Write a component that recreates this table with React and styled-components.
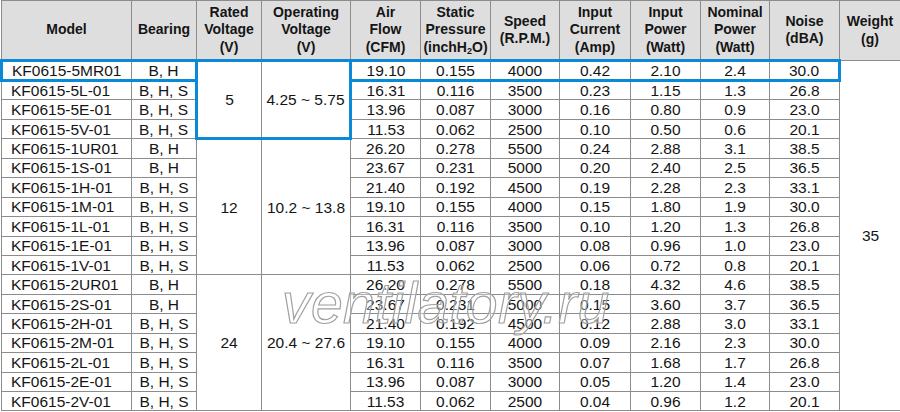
import styled, { createGlobalStyle } from "styled-components";

const GlobalStyle = createGlobalStyle`
  html, body {
    margin: 0;
    padding: 0;
    background: #fff;
  }
  body {
    font-family: "Liberation Sans", Arial, Helvetica, sans-serif;
  }
`;

const BLUE = "#0a8ad6";
const LINE = "#8c8c8c";

const Page = styled.div`
  position: relative;
  width: 900px;
  height: 412px;
  overflow: hidden;
`;

const SpecTable = styled.table`
  border-collapse: collapse;
  table-layout: fixed;
  width: 899px;
  color: #151515;
`;

const Col = styled.col`
  width: ${({ $w }) => $w}px;
`;

const HeadRow = styled.tr`
  height: 60px;
`;

const HeadCell = styled.th`
  padding: 0;
  background: #dedede;
  border: 1px solid ${LINE};
  font-size: 14px;
  line-height: 17.5px;
  font-weight: 700;
  text-align: center;
  vertical-align: middle;
  white-space: nowrap;

  sub {
    font-size: 9px;
    line-height: 0;
    vertical-align: -2px;
  }
`;

const Row = styled.tr`
  height: 19.44px;
`;

const edge = (on) => (on ? `3px solid ${BLUE}` : `1px solid ${LINE}`);

const Cell = styled.td`
  padding: ${({ $left }) => ($left ? "0 0 0 9px" : "0")};
  font-size: 15.5px;
  line-height: 17px;
  text-align: ${({ $left }) => ($left ? "left" : "center")};
  vertical-align: middle;
  white-space: nowrap;
  border-top: ${({ $hl }) => edge($hl?.includes("t"))};
  border-bottom: ${({ $hl }) => edge($hl?.includes("b"))};
  border-left: ${({ $hl }) => edge($hl?.includes("l"))};
  border-right: ${({ $hl }) => edge($hl?.includes("r"))};
`;

const Watermark = styled.span`
  position: absolute;
  left: 282px;
  top: 275px;
  font-size: 57px;
  line-height: 1;
  font-style: italic;
  letter-spacing: 0.4px;
  color: rgba(255, 255, 255, 0.35);
  -webkit-text-stroke: 1.2px #a0a0a0;
  pointer-events: none;
  white-space: nowrap;
`;

const widths = [130, 65, 65, 89, 70, 70, 69, 71, 70, 69, 70, 61];

const headers = [
  ["Model"],
  ["Bearing"],
  ["Rated", "Voltage", "(V)"],
  ["Operating", "Voltage", "(V)"],
  ["Air", "Flow", "(CFM)"],
  ["Static", "Pressure", <>(inchH<sub>2</sub>O)</>],
  ["Speed", "(R.P.M.)"],
  ["Input", "Current", "(Amp)"],
  ["Input", "Power", "(Watt)"],
  ["Nominal", "Power", "(Watt)"],
  ["Noise", "(dBA)"],
  ["Weight", "(g)"],
];

const groups = [
  {
    rated: "5",
    range: "4.25 ~ 5.75",
    highlight: true,
    rows: [
      ["KF0615-5MR01", "B, H", "19.10", "0.155", "4000", "0.42", "2.10", "2.4", "30.0"],
      ["KF0615-5L-01", "B, H, S", "16.31", "0.116", "3500", "0.23", "1.15", "1.3", "26.8"],
      ["KF0615-5E-01", "B, H, S", "13.96", "0.087", "3000", "0.16", "0.80", "0.9", "23.0"],
      ["KF0615-5V-01", "B, H, S", "11.53", "0.062", "2500", "0.10", "0.50", "0.6", "20.1"],
    ],
  },
  {
    rated: "12",
    range: "10.2 ~ 13.8",
    rows: [
      ["KF0615-1UR01", "B, H", "26.20", "0.278", "5500", "0.24", "2.88", "3.1", "38.5"],
      ["KF0615-1S-01", "B, H", "23.67", "0.231", "5000", "0.20", "2.40", "2.5", "36.5"],
      ["KF0615-1H-01", "B, H, S", "21.40", "0.192", "4500", "0.19", "2.28", "2.3", "33.1"],
      ["KF0615-1M-01", "B, H, S", "19.10", "0.155", "4000", "0.15", "1.80", "1.9", "30.0"],
      ["KF0615-1L-01", "B, H, S", "16.31", "0.116", "3500", "0.10", "1.20", "1.3", "26.8"],
      ["KF0615-1E-01", "B, H, S", "13.96", "0.087", "3000", "0.08", "0.96", "1.0", "23.0"],
      ["KF0615-1V-01", "B, H, S", "11.53", "0.062", "2500", "0.06", "0.72", "0.8", "20.1"],
    ],
  },
  {
    rated: "24",
    range: "20.4 ~ 27.6",
    rows: [
      ["KF0615-2UR01", "B, H", "26.20", "0.278", "5500", "0.18", "4.32", "4.6", "38.5"],
      ["KF0615-2S-01", "B, H", "23.67", "0.231", "5000", "0.15", "3.60", "3.7", "36.5"],
      ["KF0615-2H-01", "B, H, S", "21.40", "0.192", "4500", "0.12", "2.88", "3.0", "33.1"],
      ["KF0615-2M-01", "B, H, S", "19.10", "0.155", "4000", "0.09", "2.16", "2.3", "30.0"],
      ["KF0615-2L-01", "B, H, S", "16.31", "0.116", "3500", "0.07", "1.68", "1.7", "26.8"],
      ["KF0615-2E-01", "B, H, S", "13.96", "0.087", "3000", "0.05", "1.20", "1.4", "23.0"],
      ["KF0615-2V-01", "B, H, S", "11.53", "0.062", "2500", "0.04", "0.96", "1.2", "20.1"],
    ],
  },
];

const totalRows = groups.reduce((n, g) => n + g.rows.length, 0);

// blue frame on the first row of the 5V group, edge letters per value column
const frameFor = (vi, count) => {
  if (vi === 0) return "tbl";
  if (vi === count - 1) return "tbr";
  return "tb";
};

const App = () => {
  return (
    <Page>
      <GlobalStyle />
      <SpecTable>
        <colgroup>
          {widths.map((w, i) => (
            <Col key={i} $w={w} />
          ))}
        </colgroup>
        <thead>
          <HeadRow>
            {headers.map((lines, i) => (
              <HeadCell key={i}>
                {lines.map((line, j) => (
                  <div key={j}>{line}</div>
                ))}
              </HeadCell>
            ))}
          </HeadRow>
        </thead>
        <tbody>
          {groups.map((group, gi) =>
            group.rows.map((row, ri) => {
              const [model, bearing, ...values] = row;
              const framed = group.highlight && ri === 0;
              return (
                <Row key={model}>
                  <Cell $left $hl={framed ? "tbl" : ""}>
                    {model}
                  </Cell>
                  <Cell $hl={framed ? "tbr" : ""}>{bearing}</Cell>
                  {ri === 0 && (
                    <>
                      <Cell
                        rowSpan={group.rows.length}
                        $hl={group.highlight ? "tbl" : ""}
                      >
                        {group.rated}
                      </Cell>
                      <Cell
                        rowSpan={group.rows.length}
                        $hl={group.highlight ? "tbr" : ""}
                      >
                        {group.range}
                      </Cell>
                    </>
                  )}
                  {values.map((v, vi) => (
                    <Cell key={vi} $hl={framed ? frameFor(vi, values.length) : ""}>
                      {v}
                    </Cell>
                  ))}
                  {gi === 0 && ri === 0 && <Cell rowSpan={totalRows}>35</Cell>}
                </Row>
              );
            })
          )}
        </tbody>
      </SpecTable>
      <Watermark>ventilatory.ru</Watermark>
    </Page>
  );
};

export default App;
